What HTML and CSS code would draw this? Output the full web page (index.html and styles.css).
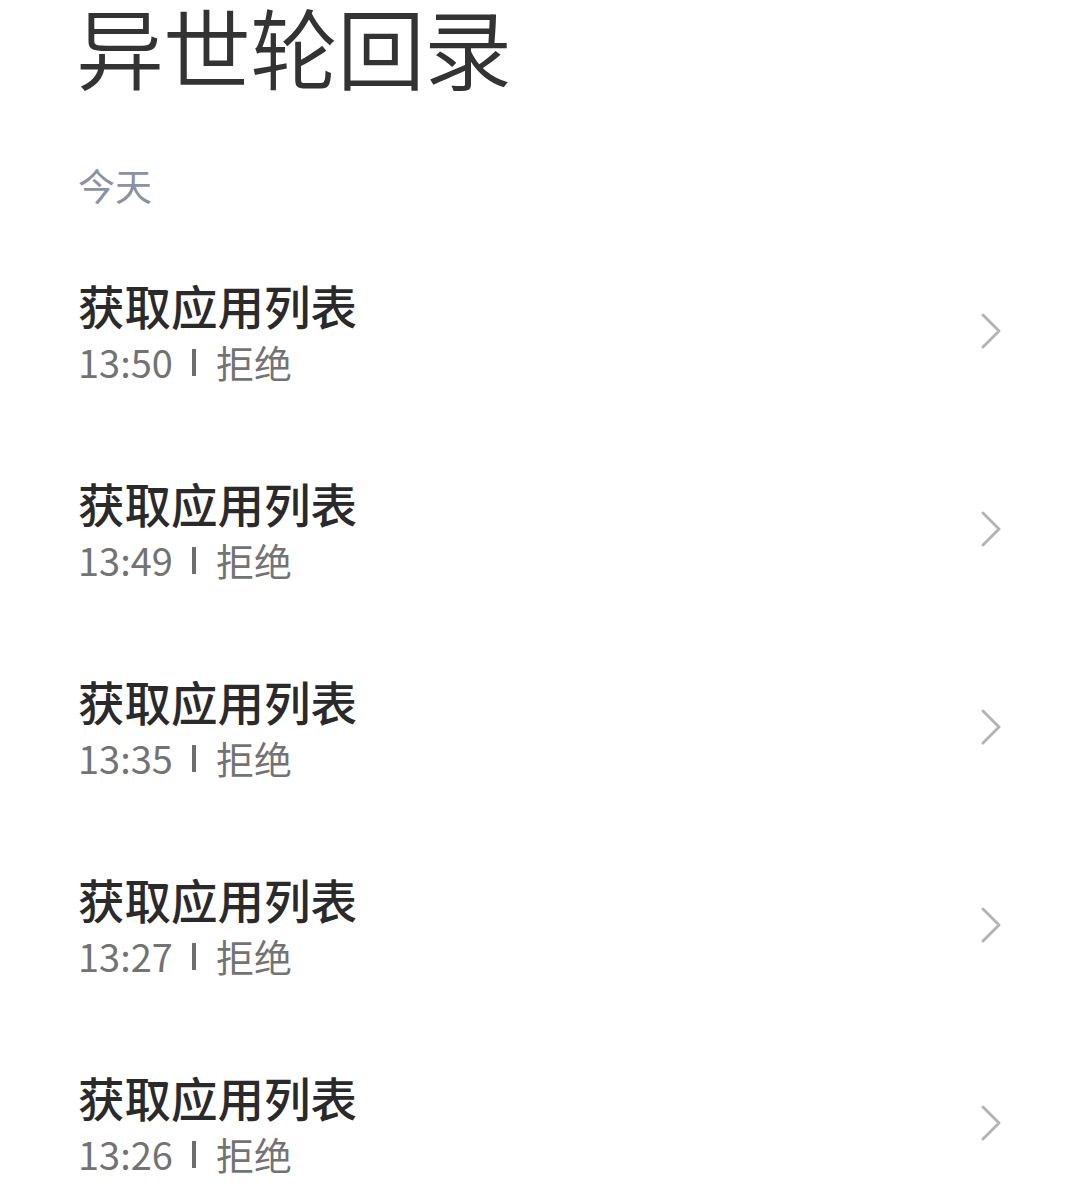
FILE: index.html
```html
<!DOCTYPE html>
<html lang="zh-CN">
<head>
    <meta charset="UTF-8">
    <meta name="viewport" content="width=device-width, initial-scale=1.0">
    <title>异世轮回录</title>
    <link rel="stylesheet" href="styles.css">
</head>
<body>

    <header class="page-header">
        <h1>异世轮回录</h1>
    </header>

    <!-- Today's records -->
    <div class="section-label">今天</div>

    <ul class="record-list">
        <li class="record">
            <div class="record-text">
                <div class="record-title">获取应用列表</div>
                <div class="record-meta"><span>13:50</span><span class="divider"></span><span>拒绝</span></div>
            </div>
            <svg class="chevron" viewBox="0 0 22 38" width="22" height="38"><path d="M3 3 L19 19 L3 35" /></svg>
        </li>
        <li class="record">
            <div class="record-text">
                <div class="record-title">获取应用列表</div>
                <div class="record-meta"><span>13:49</span><span class="divider"></span><span>拒绝</span></div>
            </div>
            <svg class="chevron" viewBox="0 0 22 38" width="22" height="38"><path d="M3 3 L19 19 L3 35" /></svg>
        </li>
        <li class="record">
            <div class="record-text">
                <div class="record-title">获取应用列表</div>
                <div class="record-meta"><span>13:35</span><span class="divider"></span><span>拒绝</span></div>
            </div>
            <svg class="chevron" viewBox="0 0 22 38" width="22" height="38"><path d="M3 3 L19 19 L3 35" /></svg>
        </li>
        <li class="record">
            <div class="record-text">
                <div class="record-title">获取应用列表</div>
                <div class="record-meta"><span>13:27</span><span class="divider"></span><span>拒绝</span></div>
            </div>
            <svg class="chevron" viewBox="0 0 22 38" width="22" height="38"><path d="M3 3 L19 19 L3 35" /></svg>
        </li>
        <li class="record">
            <div class="record-text">
                <div class="record-title">获取应用列表</div>
                <div class="record-meta"><span>13:26</span><span class="divider"></span><span>拒绝</span></div>
            </div>
            <svg class="chevron" viewBox="0 0 22 38" width="22" height="38"><path d="M3 3 L19 19 L3 35" /></svg>
        </li>
    </ul>

</body>
</html>
```

FILE: styles.css
```css
/* Global */
body {
    margin: 0;
    padding: 0;
    background: #fff;
    font-family: "Noto Sans CJK SC", "Noto Sans", sans-serif;
    color: #333;
    overflow: hidden;
}

.page-header {
    padding: 0 76px;
}

.page-header h1 {
    margin: 0;
    font-size: 88px;
    line-height: 90px;
    font-weight: 350;
    color: #333;
    letter-spacing: -1px;
}

.section-label {
    margin-top: 70px;
    padding: 0 78px;
    font-size: 37px;
    line-height: 50px;
    color: #8c91a6;
}

/* Records */
.record-list {
    list-style: none;
    margin: 23px 0 0;
    padding: 0;
}

.record {
    display: flex;
    align-items: center;
    justify-content: space-between;
    padding: 44px 78px 44px 78px;
}

.record-text {
    display: flex;
    flex-direction: column;
    gap: 4px;
}

.record-title {
    font-size: 46.5px;
    line-height: 56px;
    font-weight: 500;
    color: #2a2a2a;
}

.record-meta {
    display: flex;
    align-items: center;
    font-size: 38px;
    line-height: 50px;
    color: #737373;
}

.divider {
    display: inline-block;
    width: 4px;
    height: 27px;
    margin: 0 20px 0 19px;
    background: #6e6e6e;
}

.chevron {
    fill: none;
    stroke: #b4b4b4;
    stroke-width: 3;
    stroke-linecap: round;
    stroke-linejoin: round;
    margin-top: -2px;
}
```
